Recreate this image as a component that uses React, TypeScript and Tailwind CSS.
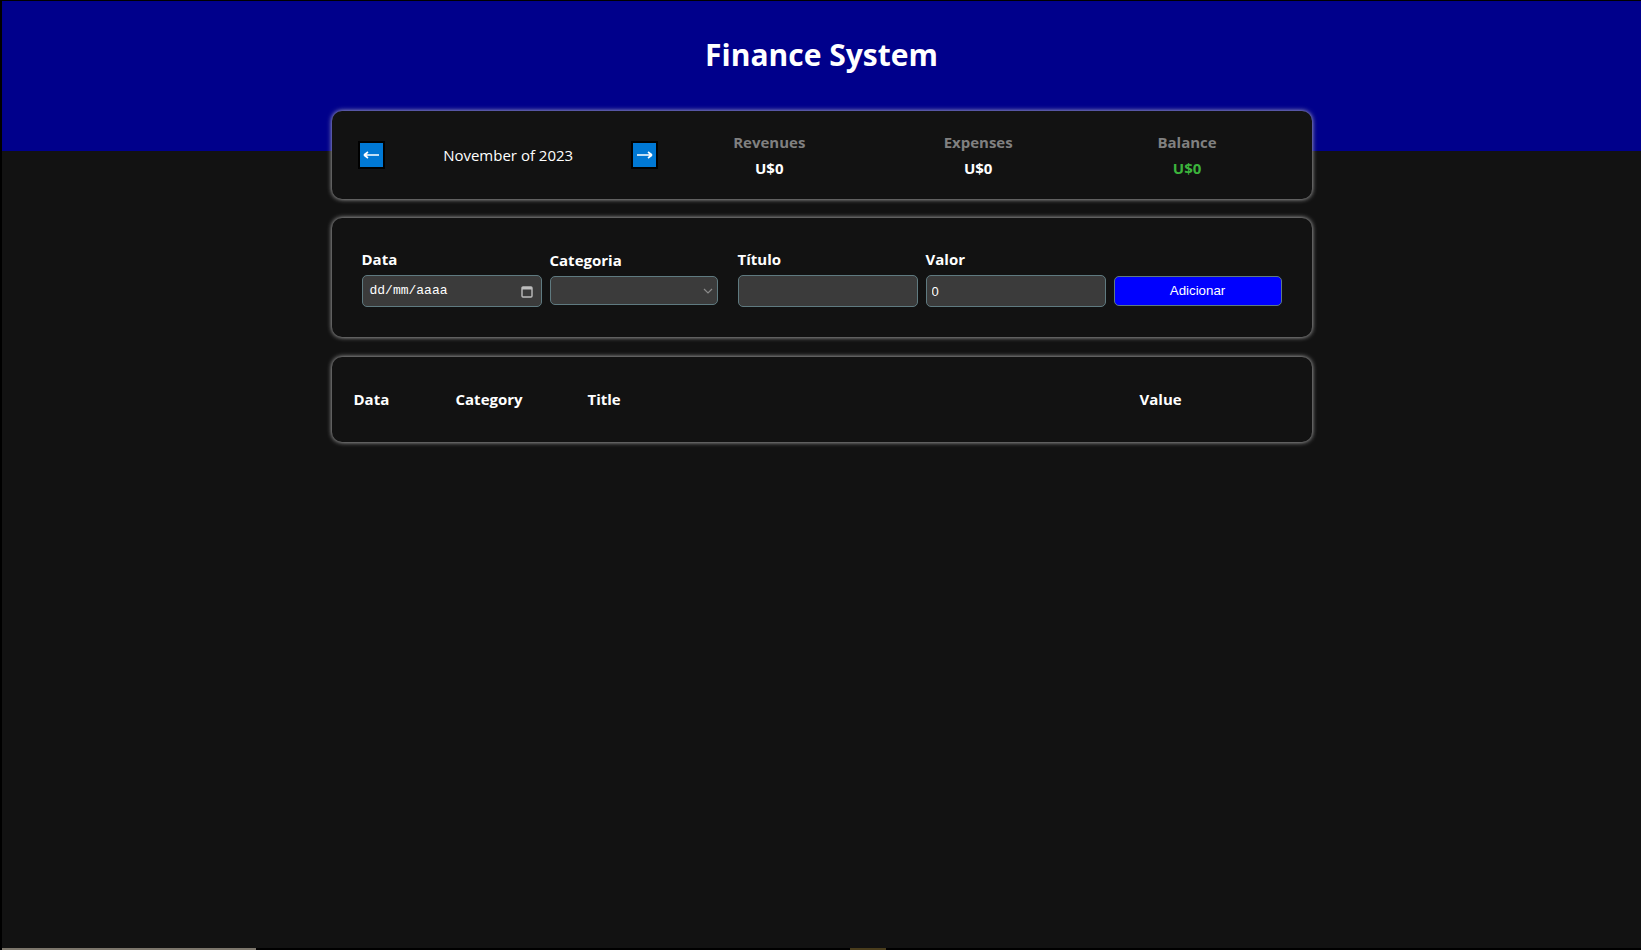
import React from 'react';

const font = { fontFamily: '"Open Sans", "Noto Sans", sans-serif' };

function ArrowButton({ dir }: { dir: 'left' | 'right' }) {
  return (
    <div className="flex w-10 justify-center">
      <button className="flex h-[28px] w-[27px] items-center justify-center border-2 border-black bg-[#0078d4]">
        <svg width="17" height="8" viewBox="0 0 17 8">
          {dir === 'left' ? (
            <path d="M1 4H16M1 4L5 1M1 4L5 7" stroke="#fff" strokeWidth="1.6" fill="none" />
          ) : (
            <path d="M1 4H16M16 4L12 1M16 4L12 7" stroke="#fff" strokeWidth="1.6" fill="none" />
          )}
        </svg>
      </button>
    </div>
  );
}

export default function App() {
  const resumo = [
    { titulo: 'Revenues', valor: 'U$0', cor: 'text-white' },
    { titulo: 'Expenses', valor: 'U$0', cor: 'text-white' },
    { titulo: 'Balance', valor: 'U$0', cor: 'text-[#3cb43c]' },
  ];

  const campo =
    'box-content h-[30px] w-full rounded-[5px] border border-[#5f7a80] bg-[#3b3b3b] px-[5px] text-[13px] text-white outline-none';

  return (
    <div className="flex h-screen flex-col bg-black pl-[2px] pt-px" style={font}>
      <div className="flex-1 overflow-hidden bg-[#121212] text-white">
        <header className="h-[150px] bg-[#00008b] text-center">
          <h1 className="pt-[34px] text-[30px] font-bold leading-[40px]">Finance System</h1>
        </header>

        <main className="mx-auto mb-[50px] max-w-[980px]">
          {/* resumo do mes */}
          <div className="-mt-10 flex items-center rounded-[10px] bg-[#121212] p-5 shadow-[0_0_5px_#cccccc]">
            <div className="flex flex-1 items-center">
              <ArrowButton dir="left" />
              <div className="flex-1 pt-px text-center text-[15px]">November of 2023</div>
              <ArrowButton dir="right" />
            </div>
            <div className="flex flex-[2] pt-px">
              {resumo.map((item) => (
                <div key={item.titulo} className="flex-1 text-center font-bold">
                  <div className="mb-[5px] text-[15px] leading-[21px] text-[#808080]">{item.titulo}</div>
                  <div className={`text-[15px] leading-[21px] ${item.cor}`}>{item.valor}</div>
                </div>
              ))}
            </div>
          </div>

          {/* formulario */}
          <div className="mt-[19px] flex rounded-[10px] bg-[#121212] p-5 shadow-[0_0_5px_#cccccc]">
            <label className="m-2.5 min-w-0 flex-1">
              <div className="h-[27px] text-[15px] font-bold leading-[22px]">Data</div>
              <div className={`${campo} flex items-center justify-between`}>
                <span className="pl-[2px] text-[13px]" style={{ fontFamily: '"Liberation Mono", monospace' }}>
                  dd/mm/aaaa
                </span>
                <svg width="12" height="13" viewBox="0 0 12 13" className="mr-[3px]">
                  <rect x="1" y="2" width="10" height="10" rx="1" stroke="#bdbdbd" strokeWidth="1.4" fill="none" />
                  <rect x="1" y="2" width="10" height="2.5" fill="#bdbdbd" />
                </svg>
              </div>
            </label>
            <label className="m-2.5 min-w-0 flex-1">
              <div className="h-[28px] text-[15px] font-bold leading-[24px]">Categoria</div>
              <div className="flex h-[29px] w-full items-center justify-end rounded-[5px] border border-[#5f7a80] bg-[#3b3b3b] pr-[4px]">
                <svg width="10" height="6" viewBox="0 0 10 6">
                  <path d="M1 1L5 5L9 1" stroke="#8a8a8a" strokeWidth="1.2" fill="none" />
                </svg>
              </div>
            </label>
            <label className="m-2.5 min-w-0 flex-1">
              <div className="h-[27px] text-[15px] font-bold leading-[22px]">Título</div>
              <input type="text" className={campo} readOnly />
            </label>
            <label className="m-2.5 min-w-0 flex-1">
              <div className="h-[27px] text-[15px] font-bold leading-[22px]">Valor</div>
              <input
                type="text"
                className={campo}
                defaultValue="0"
                readOnly
                style={{ fontFamily: '"Liberation Sans", sans-serif' }}
              />
            </label>
            <label className="m-2.5 flex min-w-0 flex-1 flex-col justify-end">
              <button
                className="mb-[1px] h-[30px] w-full rounded-[5px] border border-[#5f7a80] bg-[#0000ff] text-[13.3px] text-white"
                style={{ fontFamily: '"Liberation Sans", sans-serif' }}
              >
                Adicionar
              </button>
            </label>
          </div>

          {/* tabela */}
          <div className="mt-5 rounded-[10px] bg-[#121212] p-5 shadow-[0_0_5px_#cccccc]">
            <table className="w-full border-separate border-spacing-[2px]">
              <thead>
                <tr>
                  <th className="w-[100px] py-[9px] text-left text-[15px] font-bold">Data</th>
                  <th className="w-[130px] py-[9px] text-left text-[15px] font-bold">Category</th>
                  <th className="py-[9px] text-left text-[15px] font-bold">Title</th>
                  <th className="w-[150px] py-[9px] text-left text-[15px] font-bold">Value</th>
                </tr>
              </thead>
              <tbody></tbody>
            </table>
          </div>
        </main>
      </div>
      <div className="flex h-[2px] bg-black">
        <div className="w-[254px] bg-[#7d776c]" />
        <div className="ml-[594px] w-[36px] bg-[#4a3d1c]" />
      </div>
    </div>
  );
}
